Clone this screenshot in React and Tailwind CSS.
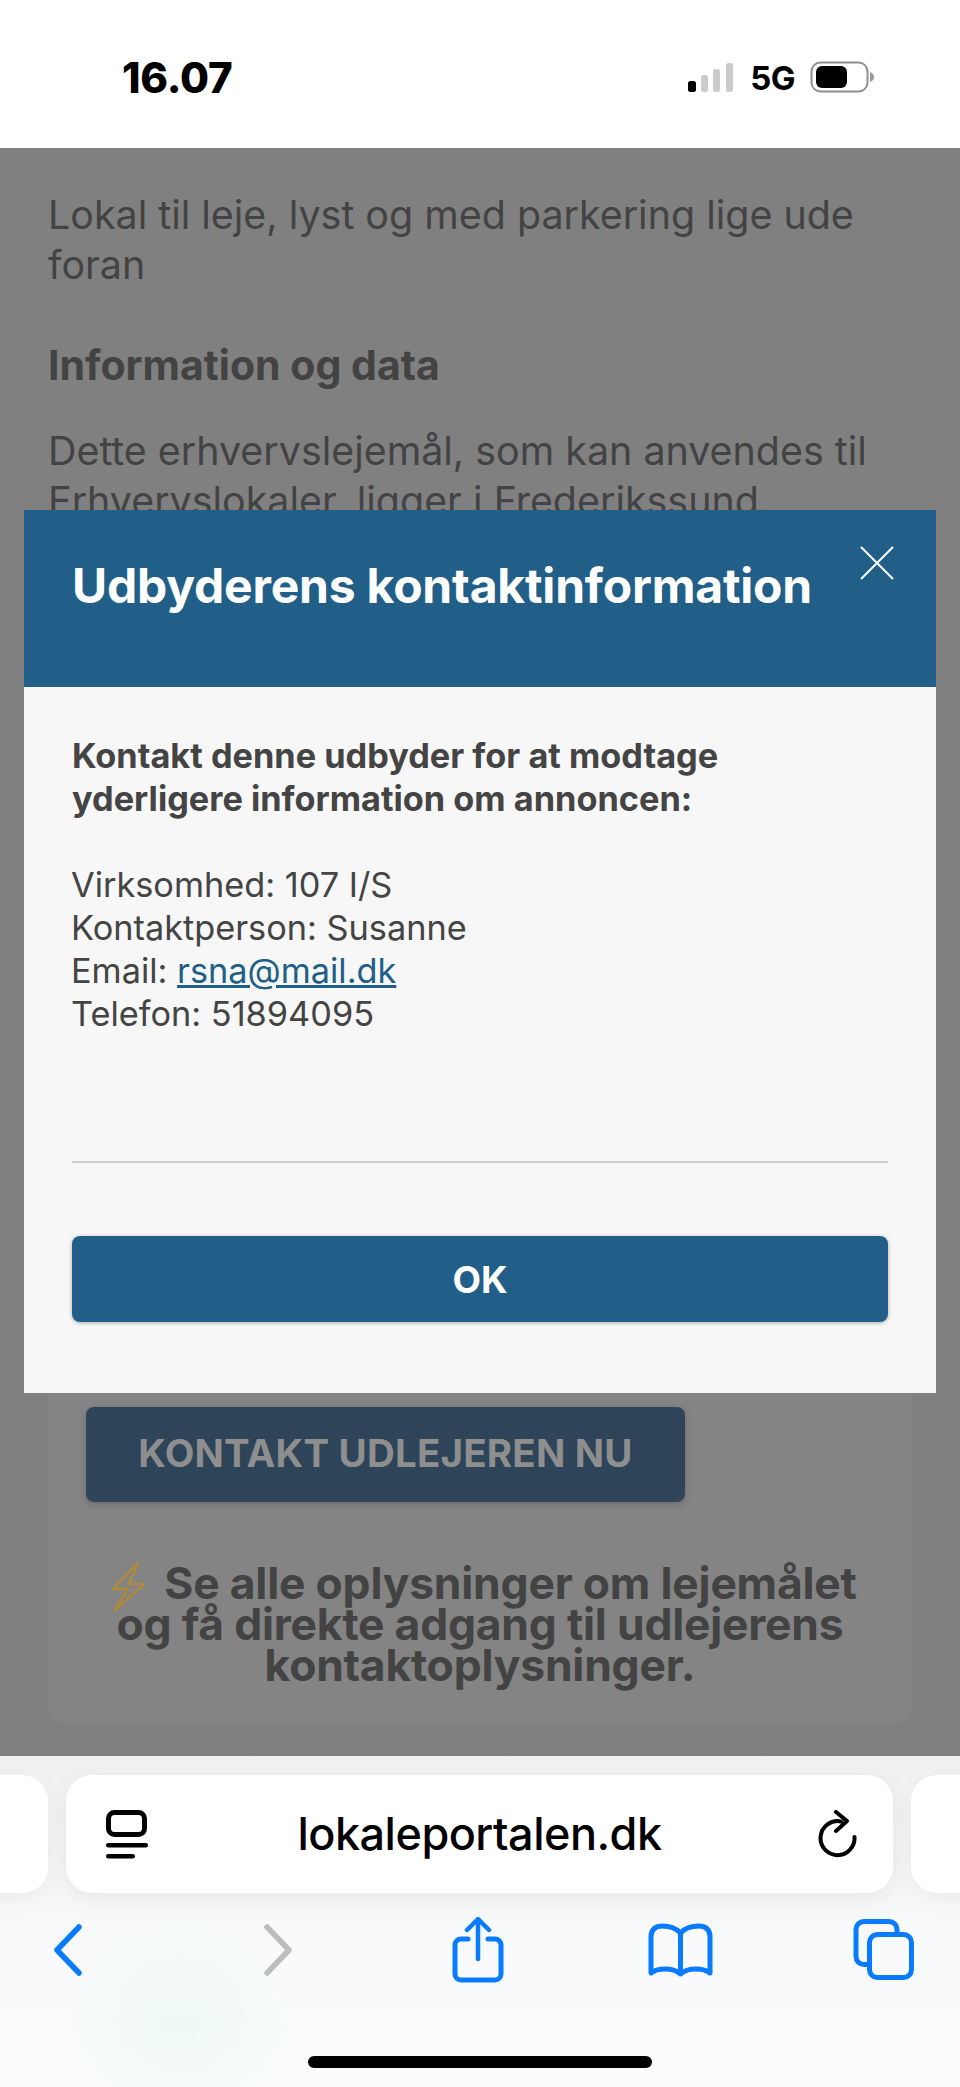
const BLUE = "#0a7aff";

function StatusBar() {
  return (
    <div className="flex h-[148px] items-start justify-between bg-white pt-[57px] pl-[122px] pr-[84px] font-['Inter',sans-serif] text-black">
      <span className="text-[42px] font-extrabold leading-[42px] tracking-[-0.2px]">16.07</span>
      <div className="flex items-start pt-[5px]">
        <svg width="46" height="30" viewBox="0 0 46 30" className="mt-px">
          <rect x="0" y="18" width="8" height="11" rx="2.5" fill="#000" />
          <rect x="13" y="12" width="7" height="17" rx="2.5" fill="#cbcbcb" />
          <rect x="25" y="6" width="7" height="23" rx="2.5" fill="#cbcbcb" />
          <rect x="38" y="0" width="7" height="29" rx="2.5" fill="#cbcbcb" />
        </svg>
        <span className="ml-[16px] text-[33px] font-bold leading-[32px] tracking-[-0.6px]">5G</span>
        <svg width="66" height="32" viewBox="0 0 66 32" className="ml-[15px] -mt-[1px]">
          <rect x="1.5" y="1.5" width="56" height="29" rx="9" fill="none" stroke="#8f8f8f" strokeWidth="2" />
          <rect x="6" y="5" width="31" height="22" rx="6" fill="#000" />
          <path d="M60 11c3 1 4 3 4 5s-1 4-4 5z" fill="#9a9a9a" />
        </svg>
      </div>
    </div>
  );
}

function ModalDialog() {
  return (
    <div className="absolute left-6 right-6 top-[362px] font-['Inter',sans-serif]">
      <div className="relative h-[177px] bg-[#215f88] pl-12 pt-[41px]">
        <h2 className="text-[48px] font-bold leading-[70px] tracking-[-0.2px] text-white">
          Udbyderens kontaktinformation
        </h2>
        <svg width="36" height="36" viewBox="0 0 36 36" className="absolute right-[41px] top-[35px]">
          <path d="M2 2l32 32M34 2L2 34" stroke="#fff" strokeWidth="2" fill="none" />
        </svg>
      </div>
      <div className="h-[706px] bg-[#f7f7f7] px-12 pt-[47px] text-[#444] text-[34.3px] leading-[43px]">
        <p className="font-bold">
          Kontakt denne udbyder for at modtage
          <br />
          yderligere information om annoncen:
        </p>
        <div className="-ml-px mt-[43px]">
          <p>Virksomhed: 107 I/S</p>
          <p>Kontaktperson: Susanne</p>
          <p>
            Email: <a className="text-[#215f88] underline">rsna@mail.dk</a>
          </p>
          <p>Telefon: 51894095</p>
        </div>
        <div className="mt-[126px] h-[2px] bg-[#cfcfcf]" />
        <button className="mt-[73px] flex h-[86px] w-full items-center justify-center rounded-lg bg-[#215f88] text-[37px] font-bold text-white shadow-[0_1px_4px_rgba(0,0,0,0.3)]">
          OK
        </button>
      </div>
    </div>
  );
}

function PageBehind() {
  return (
    <div className="relative h-[1608px] overflow-hidden bg-[#808080] font-['Inter',sans-serif] text-[#434343]">
      <div className="h-[362px] px-12 pt-[42px] text-[39.4px] leading-[50px]">
        <p>
          Lokal til leje, lyst og med parkering lige ude
          <br />
          foran
        </p>
        <p className="mt-[50px] text-[41px] font-bold">Information og data</p>
        <p className="mt-[36px]">
          Dette erhvervslejemål, som kan anvendes til
          <br />
          Erhvervslokaler, ligger i Frederikssund.
        </p>
      </div>
      <div className="absolute bottom-[33px] left-12 right-12 h-[400px] rounded-2xl bg-[#848484]" />
      <div className="relative mx-12 mt-[897px] px-[38px]">
        <div className="flex h-[95px] w-[599px] items-center justify-center rounded-lg bg-[#2d4459] pb-[2px] text-[38.500px] font-bold tracking-[0.2px] text-[#8e8e8e] shadow-[0_2px_6px_rgba(0,0,0,0.2)]">
          KONTAKT UDLEJEREN NU
        </div>
      </div>
      <div className="relative mx-8 mt-[61px] text-center text-[44.400px] font-bold leading-[41px] tracking-[-0.2px]">
        <p>
          <svg width="34" height="50" viewBox="0 0 34 50" className="-my-[14px] ml-[9px] mr-[18px] inline-block align-middle">
            <path d="M26 1L1 27h15L2 49l30-27H17z" fill="none" stroke="#b58b2f" strokeWidth="2" strokeLinejoin="round" />
          </svg>
          Se alle oplysninger om lejemålet
          <br />
          og få direkte adgang til udlejerens
          <br />
          kontaktoplysninger.
        </p>
      </div>
      <ModalDialog />
    </div>
  );
}

function Toolbar() {
  return (
    <div className="relative h-[331px] overflow-hidden bg-gradient-to-b from-[#f0f0f0] via-[#f7f9fa] to-[#fbfcfd] font-['Inter',sans-serif]">
      <div className="absolute left-[70px] top-[170px] h-[200px] w-[220px] bg-[radial-gradient(ellipse_at_center,#edf9f6_0%,rgba(240,250,248,0)_70%)]" />
      <div className="relative flex gap-[18px] pt-[19px] -ml-[100px] w-[1160px]">
        <div className="h-[118px] w-[148px] rounded-[26px] bg-white shadow-[0_6px_24px_rgba(0,0,0,0.05)]" />
        <div className="flex h-[118px] w-[827px] items-center justify-between rounded-[26px] bg-white pl-[40px] pr-[36px] shadow-[0_6px_24px_rgba(0,0,0,0.07)]">
          <svg width="42" height="49" viewBox="0 0 42 49">
            <rect x="2.500" y="2.500" width="36" height="22" rx="6" fill="none" stroke="#000" strokeWidth="5" />
            <rect x="0" y="33" width="42" height="4.500" rx="2.250" fill="#000" />
            <rect x="0" y="44" width="29" height="4.500" rx="2.250" fill="#000" />
          </svg>
          <span className="mr-[6px] text-[45px] font-medium leading-[60px] tracking-[-0.5px] text-black">lokaleportalen.dk</span>
          <svg width="40" height="48" viewBox="0 0 40 48">
            <path d="M37.500 27A17 17 0 1 1 24 11.500" fill="none" stroke="#000" strokeWidth="4" strokeLinecap="round" />
            <path d="M19 2l11 9-11 10" fill="none" stroke="#000" strokeWidth="4" strokeLinecap="round" strokeLinejoin="round" />
          </svg>
        </div>
        <div className="h-[118px] w-[148px] rounded-[26px] bg-white shadow-[0_6px_24px_rgba(0,0,0,0.05)]" />
      </div>
      <div className="relative mt-[24px] flex h-[66px] items-center pl-[53px]">
        <svg width="30" height="52" viewBox="0 0 30 52">
          <path d="M26 3L4 26l22 23" fill="none" stroke={BLUE} strokeWidth="5.500" strokeLinecap="round" strokeLinejoin="round" />
        </svg>
        <svg width="30" height="52" viewBox="0 0 30 52" className="ml-[180px]">
          <path d="M4 3l22 23L4 49" fill="none" stroke="#bdbdbd" strokeWidth="5.500" strokeLinecap="round" strokeLinejoin="round" />
        </svg>
        <svg width="52" height="66" viewBox="0 0 52 66" className="ml-[159px]">
          <path d="M16 22H9a6 6 0 0 0-6 6v29a6 6 0 0 0 6 6h34a6 6 0 0 0 6-6V28a6 6 0 0 0-6-6h-7" fill="none" stroke={BLUE} strokeWidth="5" strokeLinecap="round" />
          <path d="M26 42V3M15 13L26 2l11 11" fill="none" stroke={BLUE} strokeWidth="4.500" strokeLinecap="round" strokeLinejoin="round" />
        </svg>
        <svg width="65" height="54" viewBox="0 0 65 54" className="ml-[144px]">
          <path d="M3 50V14C3 6 8 3 14 3c8 0 14 2 18.500 7C37 5 43 3 51 3c6 0 11 3 11 11v36c-6-5-22-6-29.500 1C25 44 9 45 3 50zM32.500 10v41" fill="none" stroke={BLUE} strokeWidth="5" strokeLinejoin="round" strokeLinecap="round" />
        </svg>
        <svg width="61" height="62" viewBox="0 0 61 62" className="ml-[140px]">
          <path d="M14 45.500h-3a8 8 0 0 1-8-8V10.500a8 8 0 0 1 8-8h25a8 8 0 0 1 8 8V15" fill="none" stroke={BLUE} strokeWidth="5" />
          <rect x="16.500" y="15.500" width="42" height="43" rx="8" fill="none" stroke={BLUE} strokeWidth="5" />
        </svg>
      </div>
      <div className="absolute left-[308px] top-[300px] h-3 w-[344px] rounded-full bg-black" />
    </div>
  );
}

export default function App() {
  return (
    <div className="h-[2087px] w-[960px] overflow-hidden">
      <StatusBar />
      <PageBehind />
      <Toolbar />
    </div>
  );
}
